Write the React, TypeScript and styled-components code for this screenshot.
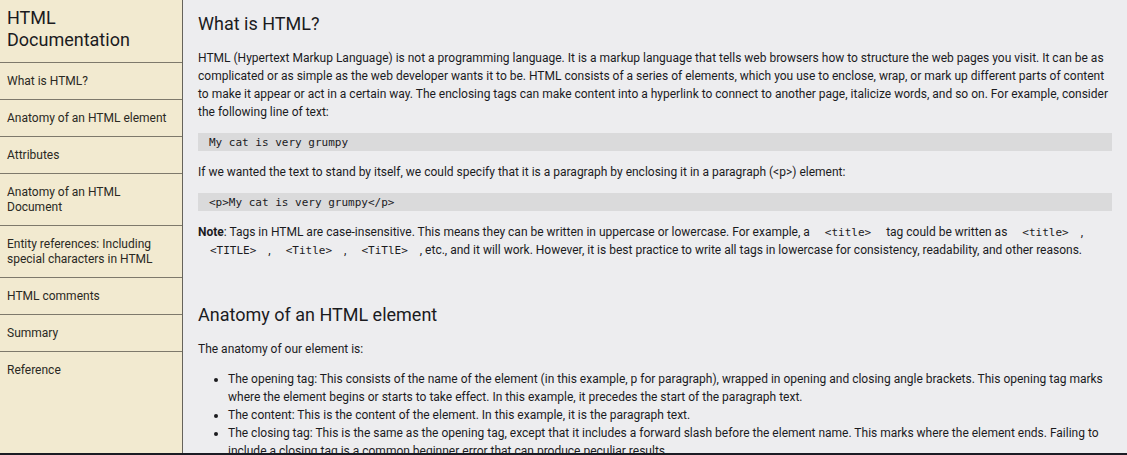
import React from "react";
import styled, { createGlobalStyle } from "styled-components";

const GlobalStyle = createGlobalStyle`
  * { box-sizing: border-box; }
  body {
    margin: 0;
    background: #ededef;
    color: #1b1b1e;
    font: 12px/18px Roboto, "Liberation Sans", sans-serif;
  }
`;

const Page = styled.div`
  display: flex;
  height: 100vh;
  overflow: hidden;
  border-bottom: 2px solid #1b1c24;
`;

const Sidebar = styled.nav`
  flex: 0 0 183px;
  background: #f2ead0;
  border-right: 1px solid #66635b;
`;

const SiteTitle = styled.h1`
  margin: 0;
  padding: 7px 7px 11px;
  font-size: 18px;
  font-weight: 400;
  line-height: 22px;
`;

const NavLink = styled.a`
  display: block;
  padding: 11px 7px 10px;
  border-top: 1px solid #7e796b;
  color: #2a2923;
  line-height: 15px;
  text-decoration: none;
`;

const Content = styled.main`
  flex: 1;
  min-width: 0;
  overflow: hidden;
  padding: 10px 15px;
`;

const Section = styled.section`
  margin-bottom: 42px;
`;

const Heading = styled.h2`
  margin: 0;
  font-size: 18px;
  font-weight: 400;
  line-height: 27px;
`;

const Text = styled.p`
  margin: 12px 0 0;
`;

const CodeBlock = styled.pre`
  margin: 12px 0 0;
  padding: 2px 11px 0;
  background: #dadadb;
  font: 11px/16px "DejaVu Sans Mono", monospace;
`;

const Code = styled.code`
  padding: 0 12px;
  font: 11px/12px "DejaVu Sans Mono", monospace;
`;

const List = styled.ul`
  margin: 12px 0 0;
  padding-left: 30px;
`;

const links = [
  "What is HTML?",
  "Anatomy of an HTML element",
  "Attributes",
  "Anatomy of an HTML Document",
  "Entity references: Including special characters in HTML",
  "HTML comments",
  "Summary",
  "Reference",
];

export default function App() {
  return (
    <Page>
      <GlobalStyle />
      <Sidebar>
        <SiteTitle>HTML Documentation</SiteTitle>
        {links.map((label) => (
          <NavLink key={label} href={"#" + label.replace(/ /g, "_")}>
            {label}
          </NavLink>
        ))}
      </Sidebar>
      <Content>
        <Section id="What_is_HTML?">
          <Heading>What is HTML?</Heading>
          <Text>
            HTML (Hypertext Markup Language) is not a programming language. It
            is a markup language that tells web browsers how to structure the
            web pages you visit. It can be as complicated or as simple as the
            web developer wants it to be. HTML consists of a series of
            elements, which you use to enclose, wrap, or mark up different
            parts of content to make it appear or act in a certain way. The
            enclosing tags can make content into a hyperlink to connect to
            another page, italicize words, and so on. For example, consider the
            following line of text:
          </Text>
          <CodeBlock>My cat is very grumpy</CodeBlock>
          <Text>
            If we wanted the text to stand by itself, we could specify that it
            is a paragraph by enclosing it in a paragraph (&lt;p&gt;) element:
          </Text>
          <CodeBlock>{"<p>My cat is very grumpy</p>"}</CodeBlock>
          <Text>
            <strong>Note</strong>: Tags in HTML are case-insensitive. This
            means they can be written in uppercase or lowercase. For example, a{" "}
            <Code>{"<title>"}</Code> tag could be written as{" "}
            <Code>{"<title>"}</Code>, <Code>{"<TITLE>"}</Code>,{" "}
            <Code>{"<Title>"}</Code>, <Code>{"<TiTlE>"}</Code>, etc., and it
            will work. However, it is best practice to write all tags in
            lowercase for consistency, readability, and other reasons.
          </Text>
        </Section>
        <Section id="Anatomy_of_an_HTML_element">
          <Heading>Anatomy of an HTML element</Heading>
          <Text>The anatomy of our element is:</Text>
          <List>
            <li>
              The opening tag: This consists of the name of the element (in
              this example, p for paragraph), wrapped in opening and closing
              angle brackets. This opening tag marks where the element begins
              or starts to take effect. In this example, it precedes the start
              of the paragraph text.
            </li>
            <li>
              The content: This is the content of the element. In this example,
              it is the paragraph text.
            </li>
            <li>
              The closing tag: This is the same as the opening tag, except that
              it includes a forward slash before the element name. This marks
              where the element ends. Failing to include a closing tag is a
              common beginner error that can produce peculiar results.
            </li>
          </List>
        </Section>
      </Content>
    </Page>
  );
}
